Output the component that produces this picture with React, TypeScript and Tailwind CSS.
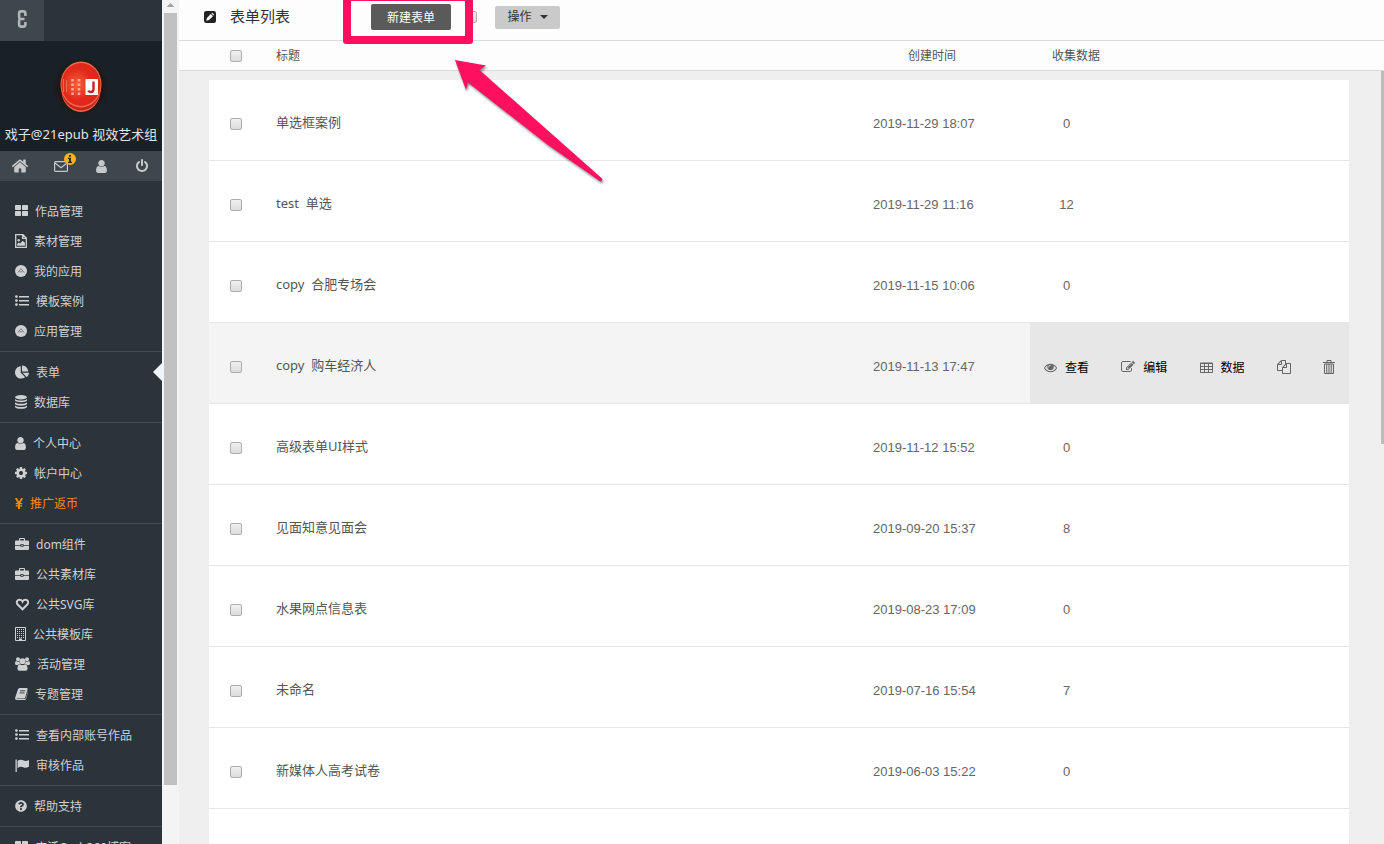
import React from "react";
import { FaChartPie, FaQuestionCircle } from "react-icons/fa";

const FONT = "font-['Noto_Sans','Noto_Sans_CJK_SC',sans-serif]";

type IconProps = { className?: string };

function Glyph({ d, className = "size-[14px]" }: { d: string; className?: string }) {
  return (
    <svg viewBox="0 0 1792 1792" className={`shrink-0 ${className}`} fill="currentColor" aria-hidden="true">
      <path d={d} />
    </svg>
  );
}

const USER =
  "M1536 1399q0 109-62.5 187t-150.5 78h-854q-88 0-150.5-78t-62.5-187q0-85 8.5-160.5t31.5-152 58.5-131 94-89 134.5-34.5q131 128 313 128t313-128q76 0 134.5 34.5t94 89 58.5 131 31.5 152 8.5 160.5zm-256-887q0 159-112.5 271.5t-271.5 112.5-271.5-112.5-112.5-271.5 112.5-271.5 271.5-112.5 271.5 112.5 112.5 271.5z";
const HOME =
  "M1472 992v480q0 26-19 45t-45 19h-384v-384h-256v384h-384q-26 0-45-19t-19-45v-480q0-1 .5-3t.5-3l575-474 575 474q1 2 1 6zm223-69l-62 74q-8 9-21 11h-3q-13 0-21-7l-692-577-692 577q-12 8-24 7-13-2-21-11l-62-74q-8-10-7-23.5t11-21.5l719-599q32-26 76-26t76 26l244 204v-195q0-14 9-23t23-9h192q14 0 23 9t9 23v408l219 182q10 8 11 21.5t-7 23.5z";
const POWER =
  "M1664 896q0 156-61 298t-164 245-245 164-298 61-298-61-245-164-164-245-61-298q0-182 80.5-343t226.5-270q43-32 95.5-25t83.5 50q32 42 24.5 94.5t-49.5 84.5q-98 74-151.5 181t-53.5 228q0 104 40.5 198.5t109.5 163.5 163.5 109.5 198.5 40.5 198.5-40.5 163.5-109.5 109.5-163.5 40.5-198.5q0-121-53.5-228t-151.5-181q-42-32-49.5-84.5t24.5-94.5q31-43 84-50t95 25q146 109 226.5 270t80.5 343zm-640-768v640q0 52-38 90t-90 38-90-38-38-90v-640q0-52 38-90t90-38 90 38 38 90z";
const COG =
  "M1152 896q0-106-75-181t-181-75-181 75-75 181 75 181 181 75 181-75 75-181zm512-109v222q0 12-8 23t-20 13l-185 28q-19 54-39 91 35 50 107 138 10 12 10 25t-9 23q-27 37-99 108t-94 71q-12 0-26-9l-138-108q-44 23-91 38-16 136-29 186-7 28-36 28h-222q-14 0-24.5-8.5t-11.5-21.5l-28-184q-49-16-90-37l-141 107q-10 9-25 9-14 0-25-11-126-114-165-168-7-10-7-23 0-12 8-23 15-21 51-66.5t54-70.5q-27-50-41-99l-183-27q-13-2-21-12.5t-8-23.5v-222q0-12 8-23t19-13l186-28q14-46 39-92-40-57-107-138-10-12-10-24 0-10 9-23 26-36 98.5-107.5t94.5-71.5q13 0 26 10l138 107q44-23 91-38 16-136 29-186 7-28 36-28h222q14 0 24.5 8.5t11.5 21.5l28 184q49 16 90 37l142-107q9-9 24-9 13 0 25 10 129 119 165 170 7 8 7 22 0 12-8 23-15 21-51 66.5t-54 70.5q26 50 41 98l183 28q13 2 21 12.5t8 23.5z";
const EYE =
  "M1664 960q-152-236-381-353 61 104 61 225 0 185-131.5 316.5t-316.5 131.5-316.5-131.5-131.5-316.5q0-121 61-225-229 117-381 353 133 205 333.5 326.5t434.5 121.5 434.5-121.5 333.5-326.5zm-720-384q0-20-14-34t-34-14q-125 0-214.5 89.5t-89.5 214.5q0 20 14 34t34 14 34-14 14-34q0-86 61-147t147-61q20 0 34-14t14-34zm848 384q0 34-20 69-140 230-376.5 368.5t-499.5 138.5-499.5-139-376.5-368q-20-35-20-69t20-69q140-229 376.5-368t499.5-139 499.5 139 376.5 368q20 35 20 69z";
const FILES =
  "M1696 384q40 0 68 28t28 68v1216q0 40-28 68t-68 28h-960q-40 0-68-28t-28-68v-288h-544q-40 0-68-28t-28-68v-672q0-40 20-88t48-76l408-408q28-28 76-48t88-20h416q40 0 68 28t28 68v328q68-40 128-40h416zm-544 213l-299 299h299v-299zm-640-384l-299 299h299v-299zm196 647l316-316v-416h-384v416q0 40-28 68t-68 28h-416v640h512v-256q0-40 20-88t48-76zm956 804v-1152h-384v416q0 40-28 68t-68 28h-416v640h896z";
const EDIT =
  "M888 1184l116-116-152-152-116 116v56h96v96h56zm440-720q-16-16-33 1l-350 350q-17 17-1 33t33-1l350-350q17-17 1-33zm80 594v190q0 119-84.5 203.5t-203.5 84.5h-832q-119 0-203.5-84.5t-84.5-203.5v-832q0-119 84.5-203.5t203.5-84.5h832q63 0 117 25 15 7 18 23 3 17-9 29l-49 49q-14 14-32 8-23-6-45-6h-832q-66 0-113 47t-47 113v832q0 66 47 113t113 47h832q66 0 113-47t47-113v-126q0-13 9-22l64-64q15-15 35-7t20 29zm-96-738l288 288-672 672h-288v-288zm444 132l-92 92-288-288 92-92q28-28 68-28t68 28l152 152q28 28 28 68t-28 68z";

const UserIcon = () => (
  <svg viewBox="256 128 1280 1536" className="h-[13px] w-[11px] shrink-0" fill="currentColor" aria-hidden="true">
    <path d={USER} />
  </svg>
);
const CogIcon = () => (
  <svg viewBox="128 128 1536 1536" className="size-3 shrink-0" fill="currentColor" aria-hidden="true">
    <path d={COG} />
  </svg>
);
const GridIcon = () => (
  <svg viewBox="0 0 13 12" className="h-3 w-[13px] shrink-0" fill="currentColor" aria-hidden="true">
    <rect width="6" height="5" rx=".8" />
    <rect x="7" width="6" height="5" rx=".8" />
    <rect y="6" width="6" height="5" rx=".8" />
    <rect x="7" y="6" width="6" height="5" rx=".8" />
  </svg>
);
const ImageFileIcon = () => (
  <svg viewBox="0 0 12 14" className="h-[14px] w-3 shrink-0" fill="none" stroke="currentColor" strokeWidth="1.3" aria-hidden="true">
    <path d="M.7.7h7.2l3.400 3.400v9.200H.7zM7.600.6v3.800h3.800" />
    <path d="M2.200 11.800V10l1.600-1.500 1.200 1L7.700 6.800l2.200 2v3z" fill="currentColor" stroke="none" />
    <circle cx="3.700" cy="6.200" r="1.200" fill="currentColor" stroke="none" />
  </svg>
);
const AppIcon = () => (
  <svg viewBox="0 0 12 12" className="size-3 shrink-0" aria-hidden="true">
    <circle cx="6" cy="6" r="6" fill="currentColor" />
    <path d="M2.800 7.600 6 3.700l3.200 3.900M4.500 6.800h3" fill="none" stroke="#737a80" strokeWidth=".9" />
  </svg>
);
const ListIcon = () => (
  <svg viewBox="0 0 14 12" className="h-3 w-[14px] shrink-0" fill="currentColor" aria-hidden="true">
    <circle cx="1.400" cy="1.600" r="1.400" />
    <circle cx="1.400" cy="5.600" r="1.400" />
    <circle cx="1.400" cy="9.600" r="1.400" />
    <path d="M4 1h10v1.600H4zM4 5h10v1.600H4zM4 9h10v1.600H4z" />
  </svg>
);
const PieIcon = () => <FaChartPie className="size-[14px] shrink-0" />;
const DatabaseIcon = () => (
  <svg viewBox="0 0 12 14" className="h-[14px] w-3 shrink-0" fill="currentColor" aria-hidden="true">
    <ellipse cx="6" cy="2.200" rx="6" ry="2.200" />
    <path d="M0 3.900c2 2 10 2 12 0v1.700c-1 2.300-11 2.300-12 0z" />
    <path d="M0 7.300c2 2 10 2 12 0V9c-1 2.300-11 2.300-12 0z" />
    <path d="M0 10.600c2 2 10 2 12 0v1.300c-1 2.600-11 2.600-12 0z" />
  </svg>
);
const YenIcon = () => (
  <svg viewBox="0 0 8 11" className="h-[11px] w-2 shrink-0" fill="none" stroke="currentColor" aria-hidden="true">
    <path d="M.8 0 4 5.500 7.200 0M4 5v6" strokeWidth="1.900" />
    <path d="M.8 5.600h6.400M.8 7.900h6.400" strokeWidth="1.100" />
  </svg>
);
const BriefcaseIcon = () => (
  <svg viewBox="0 0 14 13" className="h-[13px] w-[14px] shrink-0" fill="currentColor" aria-hidden="true">
    <path d="M4 2.500V1q0-1 1-1h4q1 0 1 1v1.500h3q1 0 1 1V7H8.500V6h-3v1H0V3.500q0-1 1-1zM5.100 1.100v1.400h3.800V1.100z" fillRule="evenodd" />
    <path d="M0 7.800h5.500v1h3v-1H14V11q0 1-1 1H1q-1 0-1-1z" />
    <path d="M6.300 6.700h1.400v1.200H6.300z" />
  </svg>
);
const HeartIcon = () => (
  <svg viewBox="0 0 14 13" className="h-[13px] w-[14px] shrink-0" fill="none" stroke="currentColor" strokeWidth="2" aria-hidden="true">
    <path d="M7.500 11.300 2.700 6.500C.8 4.300 2.300 1.700 4.500 1.700c1.500 0 2.500 1 3 1.900.5-.9 1.500-1.900 3-1.900 2.200 0 3.700 2.600 1.800 4.800z" />
  </svg>
);
const BuildingIcon = () => (
  <svg viewBox="0 0 11 14" className="h-[14px] w-[11px] shrink-0" aria-hidden="true">
    <path d="M.5.5h10v13H.5z" fill="none" stroke="currentColor" />
    <path d="M2 2.500h7M2 4.500h7M2 6.500h7M2 8.500h7M2 10.500h7" stroke="currentColor" strokeDasharray="1 1" />
    <path d="M4 11.500h3V14H4z" fill="currentColor" />
  </svg>
);
const UsersIcon = () => (
  <svg viewBox="0 0 15 14" className="h-[14px] w-[15px] shrink-0" fill="currentColor" aria-hidden="true">
    <circle cx="3" cy="2.200" r="2" />
    <circle cx="12" cy="2.200" r="2" />
    <circle cx="7.500" cy="4.200" r="2.900" />
    <path d="M1 4q2 1.400 3.300.4Q4.400 6 5.400 7 3.700 7 3 8.100H1.500Q0 8.100 0 6.800 0 4.400 1 4zM14 4q-2 1.400-3.300.4Q10.600 6 9.600 7q1.700 0 2.400 1.100h1.500q1.500 0 1.500-1.300Q15 4.400 14 4z" />
    <path d="M5 7.200q2.500 1.800 5 0 2.600.3 2.600 4.600 0 2-2 2H4.400q-2 0-2-2 0-4.300 2.600-4.600z" />
  </svg>
);
const BookIcon = () => (
  <svg viewBox="0 0 13 12" className="h-3 w-[13px] shrink-0" aria-hidden="true">
    <path d="M4.600 0h7q1.300 0 1 1.300l-2.300 8.200q-.3.900-1.300.9H2.300q-.8 0-.7.600h8.200q.8 0 1-.7L13 3v1l-2 7q-.3 1-1.300 1H1.700Q-.3 12 .1 9.900L2.900 1.500Q3.400 0 4.600 0z" fill="currentColor" />
    <path d="M5.200 2.800h5M4.500 4.900h5" stroke="#2b343b" strokeWidth=".9" />
  </svg>
);
const FlagIcon = () => (
  <svg viewBox="0 0 14 13" className="h-[13px] w-[14px] shrink-0" fill="currentColor" aria-hidden="true">
    <path d="M.5.500h1.300V13H.5z" />
    <path d="M2.600 1.800C5.300.2 7 .7 8.700 1.600c1.700.8 3.300.4 5.300-.7v6.700c-2.300 1.500-4 1.500-5.800.6-1.700-.8-3.300-.7-5.600.7z" />
  </svg>
);
const HelpIcon = () => <FaQuestionCircle className="size-3 shrink-0" />;

type Item = { label: string; Icon: React.FC<IconProps>; active?: boolean; accent?: boolean };

const groups: Item[][] = [
  [
    { label: "作品管理", Icon: GridIcon },
    { label: "素材管理", Icon: ImageFileIcon },
    { label: "我的应用", Icon: AppIcon },
    { label: "模板案例", Icon: ListIcon },
    { label: "应用管理", Icon: AppIcon },
  ],
  [
    { label: "表单", Icon: PieIcon, active: true },
    { label: "数据库", Icon: DatabaseIcon },
  ],
  [
    { label: "个人中心", Icon: UserIcon },
    { label: "帐户中心", Icon: CogIcon },
    { label: "推广返币", Icon: YenIcon, accent: true },
  ],
  [
    { label: "dom组件", Icon: BriefcaseIcon },
    { label: "公共素材库", Icon: BriefcaseIcon },
    { label: "公共SVG库", Icon: HeartIcon },
    { label: "公共模板库", Icon: BuildingIcon },
    { label: "活动管理", Icon: UsersIcon },
    { label: "专题管理", Icon: BookIcon },
  ],
  [
    { label: "查看内部账号作品", Icon: ListIcon },
    { label: "审核作品", Icon: FlagIcon },
  ],
  [{ label: "帮助支持", Icon: HelpIcon }],
  [{ label: "店活Cash360博客", Icon: GridIcon }],
];

const rows = [
  { title: "单选框案例", date: "2019-11-29 18:07", count: 0 },
  { title: "test\u00a0 单选", date: "2019-11-29 11:16", count: 12 },
  { title: "copy\u00a0 合肥专场会", date: "2019-11-15 10:06", count: 0 },
  { title: "copy\u00a0 购车经济人", date: "2019-11-13 17:47", selected: true },
  { title: "高级表单UI样式", date: "2019-11-12 15:52", count: 0 },
  { title: "见面知意见面会", date: "2019-09-20 15:37", count: 8 },
  { title: "水果网点信息表", date: "2019-08-23 17:09", count: 0 },
  { title: "未命名", date: "2019-07-16 15:54", count: 7 },
  { title: "新媒体人高考试卷", date: "2019-06-03 15:22", count: 0 },
];

function Check({ label }: { label: string }) {
  return (
    <input
      type="checkbox"
      aria-label={label}
      className="block size-3 shrink-0 appearance-none rounded-[2px] border border-[#adadad] bg-linear-to-b from-[#f0f0f0] to-[#dcdcdc] checked:bg-[#777]"
    />
  );
}

function Avatar() {
  return (
    <svg viewBox="0 0 60 60" className="size-[60px]" aria-hidden="true">
      <defs>
        <radialGradient id="disc" cx=".4" cy=".5" r=".6">
          <stop offset="0" stopColor="#f8623a" />
          <stop offset=".6" stopColor="#e22a1c" />
          <stop offset="1" stopColor="#dc2418" />
        </radialGradient>
        <radialGradient id="glow">
          <stop offset=".65" stopColor="#22130f" />
          <stop offset="1" stopColor="#1a2126" />
        </radialGradient>
      </defs>
      <circle cx="30" cy="31" r="29" fill="url(#glow)" />
      <ellipse cx="30" cy="34" rx="19.500" ry="22" fill="#f0694a" />
      <ellipse cx="30" cy="32.500" rx="19.500" ry="22" fill="#c8241a" />
      <ellipse cx="30" cy="28.500" rx="20.500" ry="23" fill="#f4694a" />
      <ellipse cx="30" cy="28.500" rx="19.500" ry="21.500" fill="url(#disc)" />
      <path d="M12.500 23v13M15.500 24v12" stroke="#f4694d" strokeWidth="1" />
      <path d="M21.500 23v16M28 23v16" stroke="#ffa794" strokeWidth="2.600" strokeDasharray="2.500 2" />
      <rect x="34.500" y="23" width="12.500" height="16" fill="#fff" />
      <path d="M42.500 25.500v7.500q0 3-2.600 3-1.700 0-2.700-1.400" fill="none" stroke="#c8202b" strokeWidth="2.400" />
    </svg>
  );
}

function Sidebar() {
  return (
    <aside className="flex w-[162px] shrink-0 flex-col overflow-hidden bg-[#2b343b] text-[#cfd0d1]">
      <header className="h-[41px] shrink-0">
        <a href="#" aria-label="Epub360" className="flex h-full w-11 items-center justify-center bg-[#3e474e] pb-1 text-[#b2b5b7]">
          <svg viewBox="0 0 10 18" className="h-[18px] w-[10px]" fill="none" stroke="currentColor" strokeWidth="2.600" aria-hidden="true">
            <path d="M8.400 6V3.500Q8.400 1.400 6.300 1.400H4.200Q2.100 1.400 2.100 3.500v3Q2.100 9 4 9h3.500M4 9Q2.100 9 2.100 11.500v3q0 2.100 2.100 2.100h2.100q2.100 0 2.100-2.100V12" />
          </svg>
        </a>
      </header>
      <div className="flex h-[110px] shrink-0 flex-col items-center bg-[#1a2126] pt-[15px]">
        <Avatar />
        <p className="pt-2 text-[13px] leading-5 whitespace-nowrap text-[#e2e3e4]">戏子@21epub 视效艺术组</p>
      </div>
      <div className="grid h-[30px] shrink-0 grid-cols-4 bg-[#3e474e] text-[#c6c8ca]">
        <a href="#" aria-label="首页" className="flex items-center justify-center"><Glyph d={HOME} className="size-[18px]" /></a>
        <a href="#" aria-label="消息" className="relative flex items-center justify-center">
          <svg viewBox="0 0 14 12" className="h-3 w-[14px]" fill="none" stroke="currentColor" strokeWidth="1.200" aria-hidden="true">
            <rect x=".6" y="1.600" width="12.800" height="9.800" rx="1" />
            <path d="m1 3 6 4.700L13 3" />
          </svg>
          <span className="absolute top-[2px] right-[5px] flex size-3 items-center justify-center rounded-full bg-[#fbb117]">
            <svg viewBox="0 0 6 8" className="h-2 w-[6px]" fill="#3a2c10" aria-hidden="true">
              <path d="M2 0h2v1.700H2zM1 2.700h3v4h1V8H1V6.700h1V4H1z" />
            </svg>
          </span>
        </a>
        <a href="#" aria-label="用户" className="flex items-center justify-center"><UserIcon /></a>
        <a href="#" aria-label="退出" className="flex items-center justify-center"><Glyph d={POWER} /></a>
      </div>
      <nav className="pt-[10px]">
        {groups.map((group, i) => (
          <ul key={i} className="border-b border-[#424b52] py-[5px]">
            {group.map(({ label, Icon, active, accent }) => (
              <li key={label}>
                <a
                  href="#"
                  aria-current={active ? "page" : undefined}
                  className={`relative flex h-[30px] items-center gap-[7px] pl-[15px] text-xs whitespace-nowrap ${accent ? "text-[#f88b0c]" : ""}`}
                >
                  <Icon />
                  <span className="pt-[2px]">{label}</span>
                  {active && (
                    <svg viewBox="0 0 9 18" className="absolute right-0 h-[18px] w-[9px]" fill="#f2f5f8" aria-hidden="true">
                      <path d="M9 0v18L0 9z" />
                    </svg>
                  )}
                </a>
              </li>
            ))}
          </ul>
        ))}
      </nav>
    </aside>
  );
}

function RowActions() {
  return (
    <div className="flex h-20 items-center bg-[#e7e7e7] pt-2 pr-[14px] pl-[14px] text-xs text-black">
      <div className="flex flex-1 items-center justify-between">
        <button type="button" className="flex items-center gap-2"><Glyph d={EYE} className="size-[13px] text-[#666]" /><span className="pt-[2px]">查看</span></button>
        <button type="button" className="flex items-center gap-2"><Glyph d={EDIT} className="size-[14px] text-[#666]" /><span className="pt-[2px]">编辑</span></button>
        <button type="button" className="flex items-center gap-2">
          <svg viewBox="0 0 13 11" className="h-[11px] w-[13px] text-[#666]" fill="none" stroke="currentColor" aria-hidden="true">
            <path d="M.5 1h12v9.500H.5zM.5 1.500h12M.5 4.500h12M.5 7.500h12M4.500 1v9.500M8.500 1v9.500" />
          </svg>
          <span className="pt-[2px]">数据</span>
        </button>
        <button type="button" aria-label="复制"><Glyph d={FILES} className="size-[14px] text-[#666]" /></button>
        <button type="button" aria-label="删除">
          <svg viewBox="0 0 12 14" className="h-[14px] w-3 text-[#666]" fill="none" stroke="currentColor" aria-hidden="true">
            <path d="M0 2.500h12M4 2V.5h4V2M1.500 4v9.500h9V4M1.500 4h9" />
            <path d="M3.500 4v9M5.200 4v9M6.900 4v9M8.600 4v9" strokeWidth=".8" />
          </svg>
        </button>
      </div>
    </div>
  );
}

export default function App() {
  return (
    <div className={`flex h-screen overflow-hidden bg-[#efefef] text-[#555] ${FONT}`}>
      <Sidebar />
      <div className="flex w-[17px] shrink-0 flex-col items-center bg-[#f4f4f4]" aria-hidden="true">
        <svg viewBox="0 0 13 13" className="h-[13px] w-[13px] shrink-0" fill="#a3a3a3">
          <path d="M2.500 7 6.500 3l4 4z" />
        </svg>
        <div className="h-[91.5%] w-[13px] bg-[#c1c1c1]" />
      </div>
      <main className="relative min-w-0 flex-1 overflow-hidden">
        <div className="flex h-[41px] items-center border-b border-[#dcdcdc] bg-[#fdfdfd] pb-[6px] pl-[25px]">
          <svg viewBox="0 0 12 12" className="size-3 shrink-0" aria-hidden="true">
            <rect width="12" height="12" rx="2.200" fill="#222" />
            <path d="M2.300 9.700 2.900 7l3.900-3.900 2.100 2.100L5 9.100zM7.400 2.500l.8-.7 2 2-.7.8z" fill="#fff" />
          </svg>
          <h1 className="w-[155px] pb-[2px] pl-[14px] text-[15px] leading-5 text-[#333]">表单列表</h1>
          <button type="button" className="h-[26px] w-20 rounded-[2px] bg-[#5a5a5a] pt-px text-xs text-white">新建表单</button>
          <div className="pr-[18px] pl-[14px]"><Check label="全选" /></div>
          <button type="button" className="flex h-[23px] w-[65px] items-center justify-center gap-2 rounded-[2px] bg-[#cacaca] text-xs text-[#333]">
            操作
            <svg viewBox="0 0 8 4" className="h-1 w-2" fill="#333" aria-hidden="true"><path d="M0 0h8L4 4z" /></svg>
          </button>
        </div>

        <table className="w-full table-fixed border-separate border-spacing-0 text-left">
          <colgroup>
            <col className="w-[30px]" />
            <col className="w-[67px]" />
            <col />
            <col className="w-[157px]" />
            <col className="w-[319px]" />
            <col className="w-[35px]" />
          </colgroup>
          <thead>
            <tr className="h-[30px] text-xs [&>*]:border-b [&>*]:border-[#dadada] [&>*]:bg-[#fdfdfd] [&>*]:p-0 [&>*]:font-normal">
              <td />
              <th className="pl-[21px]!"><Check label="选择全部表单" /></th>
              <th>标题</th>
              <th className="pl-[35px]!">创建时间</th>
              <th className="pl-[22px]!">收集数据</th>
              <td />
            </tr>
          </thead>
          <tbody>
            <tr className="h-[9px]"><td colSpan={6} className="p-0" /></tr>
            {rows.map((row) => {
              const cell = `border-b border-[#e6e6e6] p-0 ${row.selected ? "bg-[#f4f4f4]" : "bg-white"}`;
              return (
                <tr key={row.title} className="h-[81px]">
                  <td />
                  <td className={cell}><div className="pt-2 pl-[21px]"><Check label={row.title} /></div></td>
                  <td className={`${cell} text-[13px]`}><div className="pt-[6px]">{row.title}</div></td>
                  <td className={`${cell} font-['Liberation_Sans',sans-serif] text-[13px] text-[#666]`}><div className="pt-2">{row.date}</div></td>
                  <td className={`${cell} font-['Liberation_Sans',sans-serif] text-[13px] text-[#666]`}>
                    {row.selected ? (
                      <div className={FONT}><RowActions /></div>
                    ) : (
                      <div className="w-[73px] pt-2 text-center">{row.count}</div>
                    )}
                  </td>
                  <td />
                </tr>
              );
            })}
            <tr className="h-[81px]">
              <td />
              <td colSpan={4} className="bg-white" />
              <td />
            </tr>
          </tbody>
        </table>

        <div className="absolute top-[71px] right-0 h-[373px] w-[3px] bg-[#bcbcbc]" aria-hidden="true" />
        <div className="pointer-events-none absolute top-[-7px] left-[164px] h-[51px] w-[130px] rounded-[3px] border-8 border-[#fd1060]" aria-hidden="true" />
        <svg viewBox="450 55 160 135" className="pointer-events-none absolute top-[55px] left-[271px] h-[135px] w-[160px] drop-shadow-[1px_2px_1px_rgba(0,0,0,0.45)]" fill="#fd1060" aria-hidden="true">
          <path d="M455 60 486 65.500 479.500 70 602 178.500Q603 181 600.500 181.500L548 145 468 82.500 466 90z" />
        </svg>
      </main>
    </div>
  );
}
